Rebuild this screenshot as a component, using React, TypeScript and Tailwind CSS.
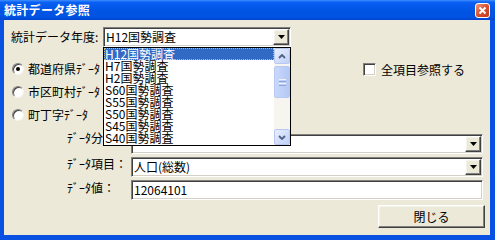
import React from "react";

const sunken =
  "bg-white border border-t-[#808080] border-l-[#808080] border-b-white border-r-white shadow-[inset_1px_1px_0_#404040,inset_-1px_-1px_0_#D4D0C8]";
const raised =
  "bg-[#ECE9D8] border border-t-white border-l-white border-b-[#404040] border-r-[#404040] shadow-[inset_-1px_-1px_0_#808080,inset_1px_1px_0_#F4F3EE]";

function DropBtn() {
  return (
    <div className={`w-[16px] h-[16px] flex items-center justify-center ${raised}`}>
      <svg width="7" height="4" viewBox="0 0 7 4">
        <path d="M0 0H7L3.5 4Z" fill="#000" />
      </svg>
    </div>
  );
}

function Combo({ text, w }: { text: string; w: string }) {
  return (
    <div className={`${w} h-[20px] flex items-center pl-[2px] pr-[1px] ${sunken}`}>
      <span className="flex-1 leading-[14px] whitespace-nowrap overflow-hidden">{text}</span>
      <DropBtn />
    </div>
  );
}

function Radio({ checked, label }: { checked?: boolean; label: string }) {
  return (
    <div className="h-[23px] flex items-start">
      <div className="w-[12px] h-[12px] rounded-full bg-white border border-t-[#808080] border-l-[#808080] border-b-[#F4F3EE] border-r-[#F4F3EE] flex items-center justify-center shadow-[inset_1px_1px_0_#404040]">
        {checked && <div className="w-[4px] h-[4px] rounded-full bg-black" />}
      </div>
      <span className="ml-[4px] leading-[12px] whitespace-nowrap">{label}</span>
    </div>
  );
}

function ScrollBtn({ up }: { up?: boolean }) {
  return (
    <div className="h-[16px] w-[16px] rounded-[2px] border border-[#B7C9F3] bg-[linear-gradient(135deg,#E8EEFE,#BFD0F8)] flex items-center justify-center">
      <svg width="8" height="5" viewBox="0 0 8 5">
        <path
          d={up ? "M1 4L4 1L7 4" : "M1 1L4 4L7 1"}
          fill="none"
          stroke="#4D6185"
          strokeWidth="1.8"
        />
      </svg>
    </div>
  );
}

const items = [
  "H12国勢調査",
  "H7国勢調査",
  "H2国勢調査",
  "S60国勢調査",
  "S55国勢調査",
  "S50国勢調査",
  "S45国勢調査",
  "S40国勢調査",
];

export default function App() {
  return (
    <div className="w-[495px] h-[240px] bg-[#0851E3] flex flex-col overflow-hidden text-[12px] text-black font-['Noto_Sans_CJK_JP',sans-serif]">
      <div className="h-[20px] flex items-center pl-[4px] bg-[linear-gradient(to_bottom,#3D8DFF_0%,#0A5FF4_12%,#0055E5_50%,#0052E2_85%,#0044CF_100%)]">
        <span className="text-white font-bold text-[12px] leading-none tracking-[0.3px]">統計データ参照</span>
        <div className="ml-auto mr-[5px] w-[15px] h-[15px] rounded-[3px] border border-white bg-[linear-gradient(135deg,#EC9A80,#D8502F_50%,#C23B1C)] flex items-center justify-center">
          <svg width="9" height="9" viewBox="0 0 9 9">
            <path d="M1.5 1.5L7.5 7.5M7.5 1.5L1.5 7.5" stroke="#fff" strokeWidth="2" />
          </svg>
        </div>
      </div>
      <div className="ml-[4px] mr-[5px] mb-[5px] flex-1 relative bg-[#ECE9D8] flex flex-col">
        <div className="mt-[7px] flex items-center">
          <span className="pl-[7px] w-[99px] whitespace-nowrap leading-[14px]">統計データ年度:</span>
          <Combo text="H12国勢調査" w="w-[188px]" />
        </div>

        <div className="mt-[16px] flex">
          <div className="w-[359px] pl-[8px] flex flex-col">
            <Radio checked label="都道府県ﾃﾞｰﾀ" />
            <Radio label="市区町村ﾃﾞｰﾀ" />
            <Radio label="町丁字ﾃﾞｰﾀ" />
          </div>
          <div className="flex items-start">
            <div className={`w-[13px] h-[13px] ${sunken}`} />
            <span className="ml-[5px] leading-[13px] whitespace-nowrap">全項目参照する</span>
          </div>
        </div>

        <div className="mt-[2px] grid grid-cols-[64px_352px] pl-[63px] gap-y-[3px] items-start">
          <span className="whitespace-nowrap leading-[12px] -mt-[2px]">ﾃﾞｰﾀ分類:</span>
          <Combo text="" w="w-[352px]" />
          <span className="whitespace-nowrap leading-[12px] mt-[1px]">ﾃﾞｰﾀ項目：</span>
          <Combo text="人口(総数)" w="w-[352px]" />
          <span className="whitespace-nowrap leading-[12px] mt-[2px]">ﾃﾞｰﾀ値：</span>
          <div className={`w-[352px] h-[20px] flex items-center pl-[2px] ${sunken}`}>
            <span className="leading-[14px]">12064101</span>
          </div>
        </div>

        <div className="mt-[5px] flex justify-end pr-[5px]">
          <div className={`w-[107px] h-[23px] flex items-center justify-center ${raised}`}>
            <span className="leading-[14px]">閉じる</span>
          </div>
        </div>

        <div className="absolute left-[99px] top-[27px] w-[188px] h-[99px] bg-white border border-black flex">
          <div className="flex-1 flex flex-col">
            {items.map((t, i) => (
              <div
                key={t}
                className={`h-[12px] pl-[1px] leading-[12px] whitespace-nowrap ${
                  i === 0 ? "bg-[#316AC5] text-white outline outline-1 outline-dotted outline-[#C8B98A] -outline-offset-1" : ""
                }`}
              >
                {t}
              </div>
            ))}
          </div>
          <div className="w-[16px] flex flex-col bg-[#F6F5F0]">
            <ScrollBtn up />
            <div className="flex-1 flex flex-col pt-[2px]">
              <div className="h-[32px] w-[16px] rounded-[2px] border border-[#B7C9F3] bg-[linear-gradient(90deg,#C9D8FC,#B4C8F5)] flex flex-col items-center justify-center gap-[1px]">
                <div className="w-[7px] h-[1px] bg-[#EEF3FE]" />
                <div className="w-[7px] h-[1px] bg-[#8CA6DC]" />
                <div className="w-[7px] h-[1px] bg-[#EEF3FE]" />
                <div className="w-[7px] h-[1px] bg-[#8CA6DC]" />
              </div>
            </div>
            <ScrollBtn />
          </div>
        </div>
      </div>
    </div>
  );
}
